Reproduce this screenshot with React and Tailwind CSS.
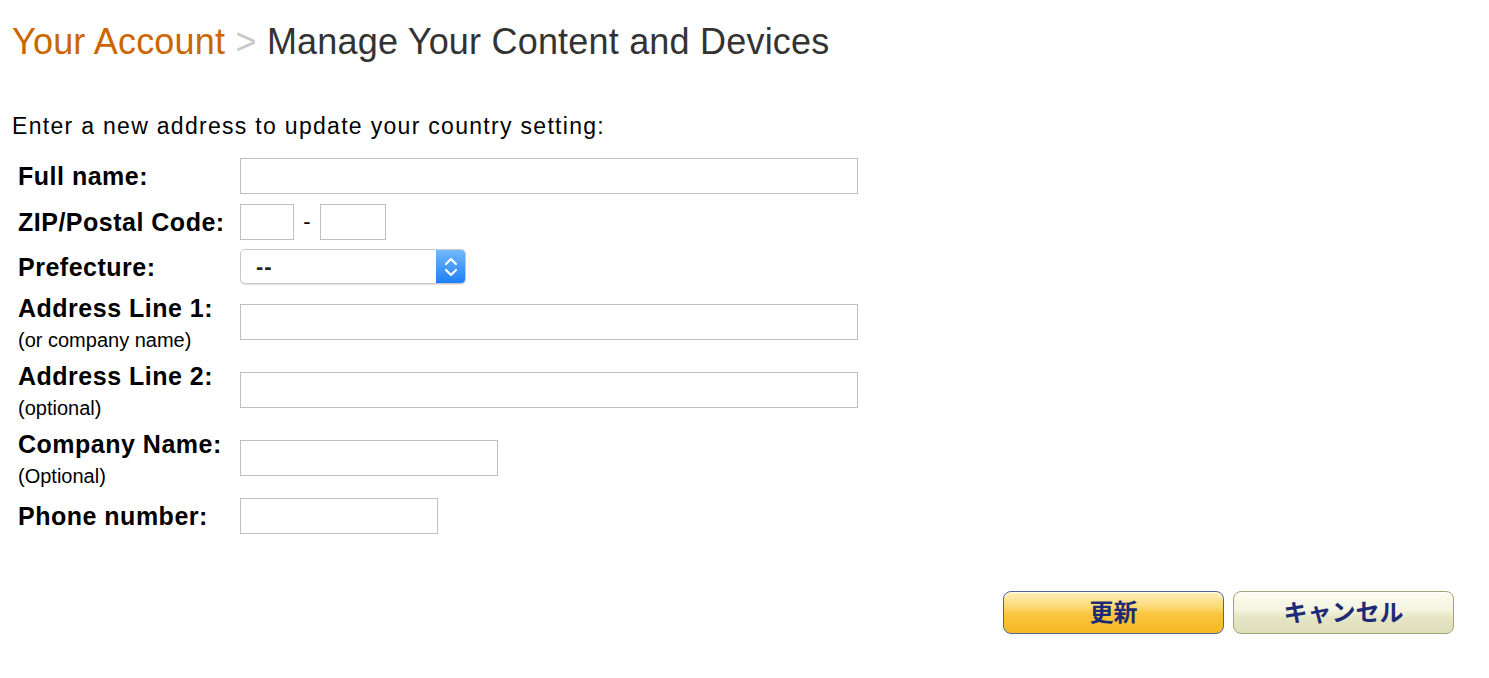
export default function App() {
  return (
    <div className="w-[1489px] h-[678px] overflow-hidden bg-white font-['Liberation_Sans',Arial,sans-serif] text-black">
      <h1 className="pt-[21px] pl-[12px] text-[36px] leading-[41px] font-normal tracking-[0.2px] whitespace-nowrap">
        <span className="text-[#cc6600]">Your Account</span>{' '}
        <span className="text-[#c8c8c8]">&gt;</span>{' '}
        <span className="text-[#333333]">Manage Your Content and Devices</span>
      </h1>

      <p className="mt-[51px] pl-[12px] text-[23px] leading-[26px] tracking-[1.3px] whitespace-nowrap">
        Enter a new address to update your country setting:
      </p>

      <div className="mt-[19px] ml-[18px]">
        {/* Full name */}
        <div className="flex items-center h-[36px]">
          <Label>Full name:</Label>
          <TextInput className="w-[618px]" />
        </div>

        {/* ZIP */}
        <div className="flex items-center h-[36px] mt-[10px]">
          <Label>ZIP/Postal Code:</Label>
          <TextInput className="w-[54px]" />
          <span className="w-[26px] text-center text-[22px] leading-[26px]">-</span>
          <TextInput className="w-[66px]" />
        </div>

        {/* Prefecture */}
        <div className="flex items-center h-[35px] mt-[9px]">
          <Label>Prefecture:</Label>
          <div className="flex w-[226px] h-[35px] rounded-[5px] border border-[#c9c9c9] bg-white shadow-[0_1px_1px_rgba(0,0,0,0.12)] overflow-hidden">
            <div className="flex-1 flex items-center pl-[15px] text-[22px] leading-none font-bold text-[#222] tracking-[1px]">
              --
            </div>
            <div className="w-[29px] h-full flex items-center justify-center bg-[linear-gradient(to_bottom,#72b8fc,#1d80f8)]">
              <svg width="14" height="24" viewBox="0 0 14 24" fill="none" stroke="white" strokeWidth="2.2" strokeLinecap="round" strokeLinejoin="round">
                <path d="M2 9 L7 4 L12 9" />
                <path d="M2 15 L7 20 L12 15" />
              </svg>
            </div>
          </div>
        </div>

        {/* Address Line 1 */}
        <div className="flex items-start mt-[10px]">
          <Label sub="(or company name)">Address Line 1:</Label>
          <TextInput className="w-[618px] mt-[10px]" />
        </div>

        {/* Address Line 2 */}
        <div className="flex items-start mt-[8px]">
          <Label sub="(optional)">Address Line 2:</Label>
          <TextInput className="w-[618px] mt-[10px]" />
        </div>

        {/* Company */}
        <div className="flex items-start mt-[8px]">
          <Label sub="(Optional)">Company Name:</Label>
          <TextInput className="w-[258px] mt-[10px]" />
        </div>

        {/* Phone */}
        <div className="flex items-center h-[36px] mt-[8px]">
          <Label>Phone number:</Label>
          <TextInput className="w-[198px]" />
        </div>
      </div>

      <div className="flex justify-end gap-[9px] pr-[35px] mt-[57px]">
        <button className="w-[221px] h-[43px] rounded-[8px] border-[1.5px] border-[#4f6399] bg-[linear-gradient(to_bottom,#fff1bd_0%,#fdd978_35%,#fac53c_55%,#f6b823_100%)] shadow-[inset_0_1px_0_rgba(255,255,255,0.8)] flex items-center justify-center pb-[3px] text-[24px] leading-none font-bold text-[#1d2a74] font-['Noto_Sans_CJK_JP',sans-serif]">
          更新
        </button>
        <button className="w-[221px] h-[43px] rounded-[8px] border-[1.5px] border-[#a3a378] bg-[linear-gradient(to_bottom,#fcfcf2_0%,#f3f3df_45%,#e6e6c8_60%,#dedeba_100%)] shadow-[inset_0_1px_0_rgba(255,255,255,0.9)] flex items-center justify-center pb-[3px] text-[24px] leading-none font-bold text-[#1d2a74] font-['Noto_Sans_CJK_JP',sans-serif]">
          キャンセル
        </button>
      </div>
    </div>
  );
}

function Label({ children, sub }) {
  return (
    <div className="w-[222px] shrink-0">
      <div className="text-[25px] leading-[28px] font-bold tracking-[0.5px] whitespace-nowrap">{children}</div>
      {sub && <div className="mt-[5px] text-[20px] leading-[27px] whitespace-nowrap">{sub}</div>}
    </div>
  );
}

function TextInput({ className }) {
  return (
    <input
      type="text"
      className={`h-[36px] border border-[#bfbfbf] bg-white outline-none ${className}`}
    />
  );
}
